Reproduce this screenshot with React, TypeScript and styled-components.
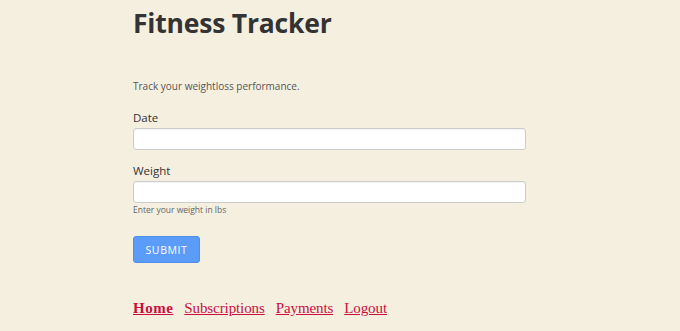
import React from "react";
import styled, { createGlobalStyle } from "styled-components";

const Global = createGlobalStyle`
  html, body { margin: 0; padding: 0; background: #f5efe0; }
  body { font-family: "Open Sans", "DejaVu Sans", sans-serif; }
`;

const Page = styled.div`
  width: 680px;
  height: 331px;
  overflow: hidden;
  padding-left: 133px;
  box-sizing: border-box;
`;

const Title = styled.h1`
  margin: 0;
  padding-top: 3px;
  font-size: 26.5px;
  line-height: 40px;
  font-weight: bold;
  color: #333;
  letter-spacing: -0.2px;
`;

const Intro = styled.p`
  margin: 35px 0 0;
  font-size: 10px;
  line-height: 16px;
  color: #555;
`;

const Form = styled.form`
  width: 393px;
  margin-top: 16px;
  display: flex;
  flex-direction: column;
`;

const Field = styled.div`
  display: flex;
  flex-direction: column;
  margin-bottom: 13px;
`;

const Label = styled.label`
  font-size: 11.5px;
  line-height: 16px;
  color: #333;
  margin-bottom: 2px;
`;

const Input = styled.input`
  height: 22px;
  box-sizing: border-box;
  border: 1px solid #ccc;
  border-radius: 3px;
  background: #fff;
  box-shadow: inset 0 1px 1px rgba(0,0,0,0.05);
`;

const Help = styled.span`
  font-size: 8.5px;
  line-height: 12px;
  color: #666;
  margin-top: 1px;
`;

const Button = styled.button`
  align-self: flex-start;
  width: 67px;
  height: 27px;
  margin-top: 7px;
  border: 1px solid #4d8fe8;
  border-radius: 3px;
  background: #5a9cf7;
  color: #fff;
  font-family: inherit;
  font-size: 10.5px;
  letter-spacing: 0.6px;
`;

const Nav = styled.nav`
  display: flex;
  gap: 11px;
  margin-top: 36px;
`;

const NavLink = styled.a<{ $active?: boolean }>`
  font-family: "Liberation Serif", serif;
  font-size: 15px;
  line-height: 18px;
  color: #c8103e;
  font-weight: ${(p) => (p.$active ? "bold" : "normal")};
  letter-spacing: ${(p) => (p.$active ? "0.5px" : "-0.1px")};
  text-decoration: underline;
`;

export default function App() {
  return (
    <>
      <Global />
      <Page>
        <Title>Fitness Tracker</Title>
        <Intro>Track your weightloss performance.</Intro>
        <Form onSubmit={(e) => e.preventDefault()}>
          <Field>
            <Label>Date</Label>
            <Input type="text" />
          </Field>
          <Field>
            <Label>Weight</Label>
            <Input type="text" />
            <Help>Enter your weight in lbs</Help>
          </Field>
          <Button type="submit">SUBMIT</Button>
        </Form>
        <Nav>
          <NavLink href="#" $active>Home</NavLink>
          <NavLink href="#">Subscriptions</NavLink>
          <NavLink href="#">Payments</NavLink>
          <NavLink href="#">Logout</NavLink>
        </Nav>
      </Page>
    </>
  );
}
